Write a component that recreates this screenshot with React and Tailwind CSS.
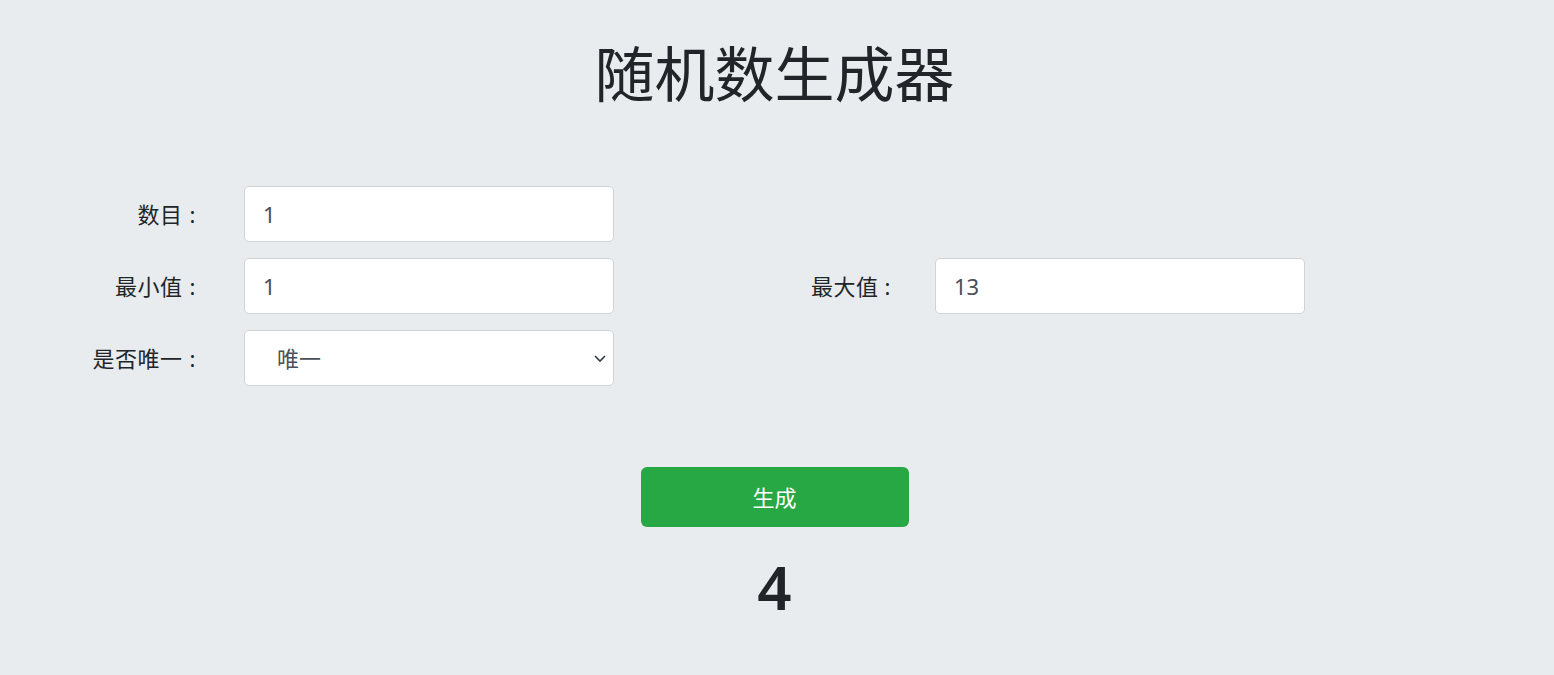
import { useState } from "react";

const font = { fontFamily: '"Noto Sans", "Noto Sans CJK SC", sans-serif' };

export default function App() {
  const [count, setCount] = useState("1");
  const [min, setMin] = useState("1");
  const [max, setMax] = useState("13");
  const [unique, setUnique] = useState("1");
  const [result, setResult] = useState("4");

  const generate = () => {
    const n = parseInt(count) || 1;
    const lo = parseInt(min) || 0;
    const hi = parseInt(max) || 0;
    const out = [];
    for (let i = 0; i < n; i++) {
      let v = lo + Math.floor(Math.random() * (hi - lo + 1));
      if (unique === "1" && out.includes(v) && out.length < hi - lo + 1) {
        i--;
        continue;
      }
      out.push(v);
    }
    setResult(out.join(", "));
  };

  const inputCls =
    "w-[370px] h-[56px] rounded-[5px] border border-[#ced4da] bg-white px-[18px] text-[22px] text-[#495057] outline-none";

  return (
    <div className="min-h-screen bg-[#e9ecef] text-[#212529] pr-[5px]" style={font}>
      {/* TITLE */}
      <h1 className="pt-[38px] text-center text-[60px] leading-[1.2] font-normal">
        随机数生成器
      </h1>

      {/* FORM */}
      <div className="mt-[76px] grid grid-cols-[214px_370px_261px_370px] gap-x-[30px] gap-y-[16px] items-center">
        <label className="text-right text-[22px] pr-[18px] tracking-[0.5px]">
          数目<span className="ml-[7px]">:</span>
        </label>
        <input
          className={inputCls}
          value={count}
          onChange={(e) => setCount(e.target.value)}
        />
        <div />
        <div />

        <label className="text-right text-[22px] pr-[18px] tracking-[0.5px]">
          最小值<span className="ml-[7px]">:</span>
        </label>
        <input
          className={inputCls}
          value={min}
          onChange={(e) => setMin(e.target.value)}
        />
        <label className="text-right text-[22px] pr-[14px] tracking-[0.5px]">
          最大值<span className="ml-[6px]">:</span>
        </label>
        <input
          className={inputCls}
          value={max}
          onChange={(e) => setMax(e.target.value)}
        />

        <label className="text-right text-[22px] pr-[18px] tracking-[0.5px]">
          是否唯一<span className="ml-[7px]">:</span>
        </label>
        <div className="relative w-[370px]">
          <select
            className="w-[370px] h-[56px] appearance-none rounded-[5px] border border-[#ced4da] bg-white pl-[32px] text-[22px] text-[#495057] outline-none"
            style={font}
            value={unique}
            onChange={(e) => setUnique(e.target.value)}
          >
            <option value="1">唯一</option>
            <option value="0">不唯一</option>
          </select>
          <svg
            className="pointer-events-none absolute right-[7px] top-[24px]"
            width="14"
            height="9"
            viewBox="0 0 14 9"
            fill="none"
          >
            <path d="M2 2l5 5 5-5" stroke="#343a40" strokeWidth="1.6" />
          </svg>
        </div>
        <div />
        <div />
      </div>

      {/* BUTTON */}
      <div className="mt-[81px] flex justify-center">
        <button
          onClick={generate}
          className="w-[268px] h-[60px] rounded-[6px] bg-[#28a745] text-white text-[22px] hover:bg-[#218838]"
        >
          生成
        </button>
      </div>

      {/* RESULT */}
      <div className="mt-[24px] text-center text-[60px] font-semibold leading-[1.2]">
        {result}
      </div>
    </div>
  );
}
